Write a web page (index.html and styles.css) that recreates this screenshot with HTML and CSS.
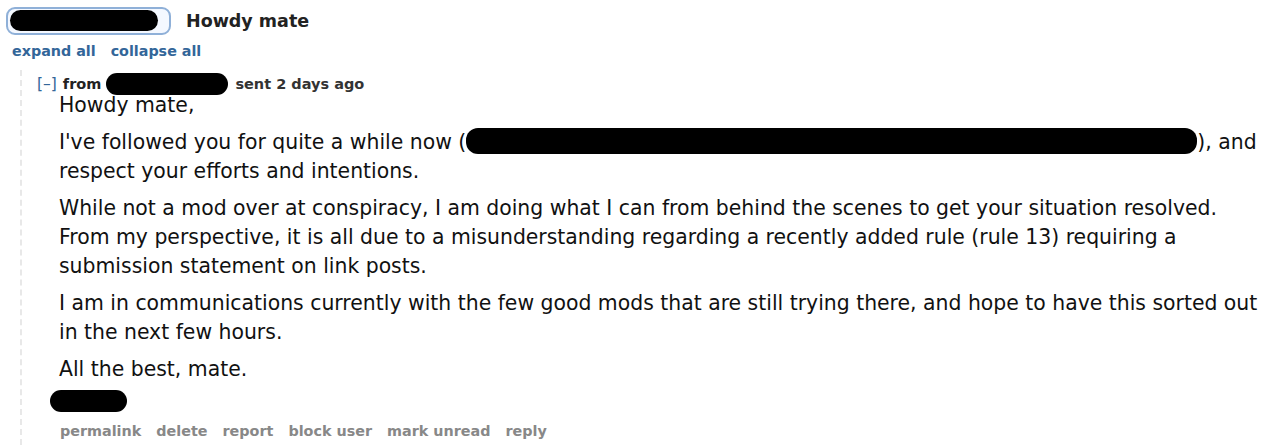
FILE: index.html
```html
<!DOCTYPE html>
<html>
<head>
<meta charset="utf-8">
<link rel="stylesheet" href="styles.css">
</head>
<body>
<div class="page">
  <div class="subject-row">
    <span class="recipient-box"><span class="redact redact-top"></span></span>
    <span class="subject">Howdy mate</span>
  </div>
  <div class="expand-row">
    <a class="blue-link">expand all</a>
    <a class="blue-link">collapse all</a>
  </div>
  <div class="thread">
    <div class="tagline">
      <span class="toggle">[–]</span>
      <span class="from">from</span>
      <span class="redact redact-author"></span>
      <span class="sent">sent 2 days ago</span>
    </div>
    <div class="md">
      <p class="first">Howdy mate,</p>
      <p>I've followed you for quite a while now (<span class="redact redact-inline"></span>), and respect your efforts and intentions.</p>
      <p>While not a mod over at conspiracy, I am doing what I can from behind the scenes to get your situation resolved. From my perspective, it is all due to a misunderstanding regarding a recently added rule (rule 13) requiring a submission statement on link posts.</p>
      <p>I am in communications currently with the few good mods that are still trying there, and hope to have this sorted out in the next few hours.</p>
      <p>All the best, mate.</p>
    </div>
    <div class="sig"><span class="redact redact-sig"></span></div>
    <ul class="buttons">
      <li>permalink</li>
      <li>delete</li>
      <li>report</li>
      <li>block user</li>
      <li>mark unread</li>
      <li>reply</li>
    </ul>
  </div>
</div>
</body>
</html>
```
FILE: styles.css
```css
html, body {
  margin: 0;
  padding: 0;
  background: #fff;
}
body {
  font-family: "DejaVu Sans", Verdana, sans-serif;
  color: #222;
}
.page {
  padding: 7px 0 0 6px;
}
.subject-row {
  display: flex;
  align-items: center;
  height: 27px;
}
.recipient-box {
  display: inline-flex;
  align-items: center;
  box-sizing: border-box;
  width: 165px;
  height: 28px;
  border: 2px solid #8fb0d8;
  border-radius: 9px;
  background: #f4f8ff;
  padding-left: 2px;
}
.redact {
  display: inline-block;
  background: #000;
  border-radius: 12px;
  vertical-align: middle;
}
.redact-top {
  width: 148px;
  height: 21px;
  border-radius: 11px;
}
.subject {
  margin-left: 15px;
  font-weight: bold;
  font-size: 17.5px;
  color: #222;
}
.expand-row {
  display: flex;
  gap: 15px;
  margin-top: 9px;
  padding-left: 6px;
  font-size: 14.3px;
  font-weight: bold;
}
.blue-link {
  color: #336699;
}
.thread {
  margin-top: 11px;
  margin-left: 14px;
  border-left: 2px dashed #e8e8e8;
  padding-left: 15px;
  padding-bottom: 6px;
}
.tagline {
  display: flex;
  align-items: center;
  font-size: 14.5px;
  font-weight: bold;
  height: 20px;
  padding-top: 4px;
}
.toggle {
  color: #336699;
  font-weight: normal;
  font-size: 15.5px;
  margin-right: 6px;
}
.from {
  color: #222;
  margin-right: 5px;
}
.redact-author {
  width: 122px;
  height: 22px;
  border-radius: 11px;
  margin-right: 7px;
}
.sent {
  color: #333;
}
.md {
  padding-left: 22px;
  padding-right: 8px;
  font-size: 20.4px;
  line-height: 29px;
  color: #111;
}
.md p {
  margin: 8px 0 0 0;
}
.md p.first {
  margin-top: -3px;
}
.redact-inline {
  width: 731px;
  height: 26px;
  border-radius: 12px;
  vertical-align: -5px;
}
.sig {
  margin-top: 6px;
  padding-left: 13px;
  height: 22px;
}
.redact-sig {
  width: 77px;
  height: 22px;
  border-radius: 11px;
}
.buttons {
  list-style: none;
  margin: 11px 0 0 0;
  padding: 0 0 0 23px;
  display: flex;
  gap: 15px;
  font-size: 14.35px;
  font-weight: bold;
  color: #888;
}
```
